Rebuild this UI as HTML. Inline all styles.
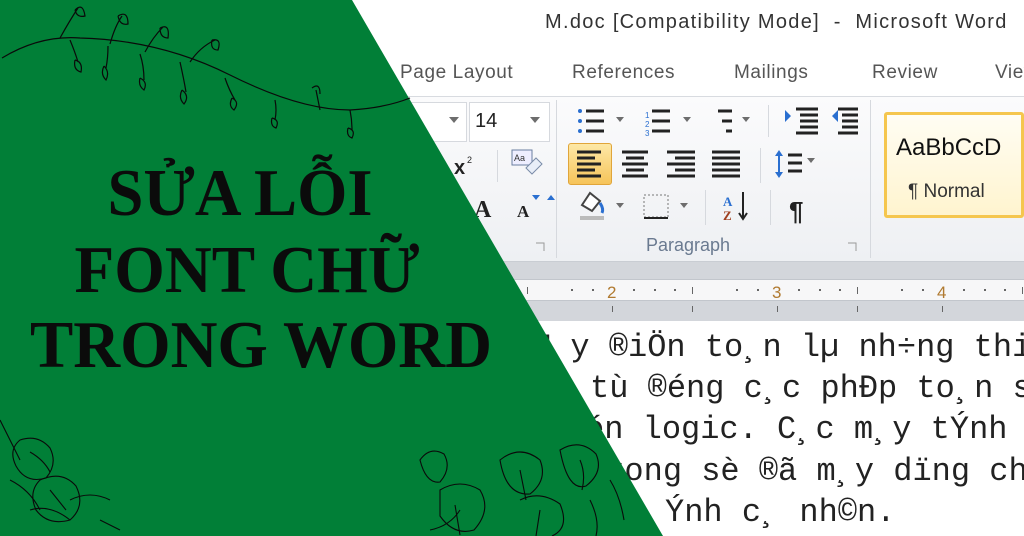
<!DOCTYPE html>
<html><head><meta charset="utf-8">
<style>
*{margin:0;padding:0;box-sizing:border-box}
body{width:1024px;height:536px;overflow:hidden;position:relative;background:#fff;font-family:"Liberation Sans",sans-serif}
.abs{position:absolute}
.title{left:545px;top:11px;font-size:20px;letter-spacing:1.3px;color:#333;white-space:nowrap}
.tab{top:62px;font-size:19px;letter-spacing:0.6px;color:#555;white-space:nowrap}
.ribbon{left:360px;top:96px;width:664px;height:166px;background:linear-gradient(#fbfbfc,#eef0f3);border-top:1px solid #d8dbe0;border-bottom:1px solid #c9cdd3}
.band{left:360px;top:262px;width:664px;height:60px;background:#d3d6db}
.ruler{left:360px;top:279px;width:664px;height:22px;background:#f7f7f8;border-top:1px solid #c2c6cc;border-bottom:1px solid #c2c6cc}
.doc{left:360px;top:321px;width:664px;height:215px;background:#fff}
.line{font-family:"Liberation Mono",monospace;font-size:32px;color:#222;white-space:nowrap;line-height:41px}
.green{left:0;top:0}
.sep{width:1px;background:#d6d9de}
</style></head><body>

<div class="abs title">M.doc [Compatibility Mode] &nbsp;-&nbsp; Microsoft Word</div>
<div class="abs tab" style="left:400px">Page Layout</div>
<div class="abs tab" style="left:572px">References</div>
<div class="abs tab" style="left:734px">Mailings</div>
<div class="abs tab" style="left:872px">Review</div>
<div class="abs tab" style="left:995px">View</div>

<div class="abs ribbon"></div>
<div class="abs" style="left:380px;top:102px;width:87px;height:40px;background:#fff;border:1px solid #d6d9de"></div>
<div class="abs" style="left:469px;top:102px;width:81px;height:40px;background:#fff;border:1px solid #d6d9de"></div>
<div class="abs" style="left:475px;top:110px;font-size:20px;color:#222">14</div>
<div class="abs sep" style="left:556px;top:100px;height:158px"></div>
<div class="abs sep" style="left:870px;top:100px;height:158px"></div>
<div class="abs sep" style="left:497px;top:150px;height:32px"></div>
<div class="abs sep" style="left:768px;top:105px;height:32px"></div>
<div class="abs sep" style="left:760px;top:148px;height:35px"></div>
<div class="abs sep" style="left:705px;top:190px;height:35px"></div>
<div class="abs sep" style="left:770px;top:190px;height:35px"></div>
<div class="abs" style="left:646px;top:235px;font-size:18px;color:#6a7a90">Paragraph</div>
<div class="abs" style="left:884px;top:112px;width:140px;height:106px;background:linear-gradient(#fffdf3,#fff4cf);border:3px solid #f5c64e;border-radius:3px"></div>
<div class="abs" style="left:896px;top:134px;font-size:24px;color:#111">AaBbCcD</div>
<div class="abs" style="left:908px;top:181px;font-size:19px;color:#333">¶ Normal</div>
<div class="abs" style="left:568px;top:143px;width:44px;height:42px;background:linear-gradient(#fde8a6,#f6c45a);border:1px solid #e0a53a;border-radius:3px"></div>

<svg class="abs" style="left:0;top:0" width="1024" height="536">
 <g fill="#6d6d6d"><path d="M449 117h10l-5 6z"/><path d="M530 117h10l-5 6z"/><path d="M616 117h8l-4 5z"/><path d="M683 117h8l-4 5z"/><path d="M742 117h8l-4 5z"/><path d="M807 158h8l-4 5z"/><path d="M616 203h8l-4 5z"/><path d="M680 203h8l-4 5z"/></g>
 <g stroke="#222" stroke-width="3">
  <path d="M586 111h18M586 121h18M586 131h18"/>
  <path d="M652 111h18M652 121h18M652 131h18"/>
  <path d="M718 111h14M722 121h10M726 131h6"/>
  <path d="M796 109h22M800 115h18M800 121h18M800 127h18M796 133h22"/>
  <path d="M838 109h20M842 115h16M842 121h16M842 127h16M838 133h20"/>
  <path d="M577 152h24M577 158h18M577 164h24M577 170h18M577 176h24"/>
  <path d="M622 152h26M626 158h18M622 164h26M626 170h18M622 176h26"/>
  <path d="M667 152h28M675 158h20M667 164h28M675 170h20M667 176h28"/>
  <path d="M712 152h28M712 158h28M712 164h28M712 170h28M712 176h28"/>
  <path d="M788 155h14M788 163h14M788 171h14"/>
 </g>
 <g fill="#2a6fd0"><circle cx="580" cy="111" r="2"/><circle cx="580" cy="121" r="2"/><circle cx="580" cy="131" r="2"/>
 <path d="M791 116l-6-6v12zM832 116l6-6v12z"/><path d="M779 150l-4 6h8zM779 178l-4-6h8z"/><path d="M551 195l-4 5h8zM536 200l-4-5h8z"/></g>
 <path d="M779 152v24" stroke="#2a6fd0" stroke-width="2"/>
 <text x="645" y="118" font-size="8" fill="#2a6fd0">1</text><text x="645" y="127" font-size="8" fill="#2a6fd0">2</text><text x="645" y="136" font-size="8" fill="#2a6fd0">3</text>
 <text x="454" y="174" font-size="20" font-weight="bold" fill="#222" font-family="Liberation Sans">x</text><text x="467" y="163" font-size="9" fill="#222">2</text>
 <rect x="512" y="150" width="20" height="15" fill="#eef" stroke="#6a7fa0"/><text x="514" y="161" font-size="9" fill="#333">Aa</text>
 <path d="M526 168l10-10 6 6-10 10z" fill="#e8eef8" stroke="#7a8ca8"/>
 <text x="474" y="217" font-size="24" font-family="Liberation Serif" font-weight="bold" fill="#222">A</text>
 <text x="517" y="217" font-size="17" font-family="Liberation Serif" font-weight="bold" fill="#222">A</text>
 <path d="M580 218h24" stroke="#bbb" stroke-width="4"/><path d="M582 205l8-12 10 8-8 10z" fill="#fff" stroke="#444" stroke-width="2"/><path d="M600 203q4 6 2 10" stroke="#2a6fd0" stroke-width="3" fill="none"/>
 <rect x="644" y="195" width="24" height="22" fill="none" stroke="#777" stroke-dasharray="2 2"/><path d="M644 218h24" stroke="#222" stroke-width="2"/>
 <text x="723" y="206" font-size="13" font-weight="bold" fill="#2a6fd0" font-family="Liberation Serif">A</text><text x="723" y="220" font-size="13" font-weight="bold" fill="#a04020" font-family="Liberation Serif">Z</text>
 <path d="M743 192v26M739 213l4 6 4-6" stroke="#222" stroke-width="2" fill="none"/>
 <text x="789" y="220" font-size="26" font-weight="bold" fill="#222">¶</text>
 <path d="M536 243h8v8M848 243h8v8" stroke="#999" fill="none"/>
</svg>

<div class="abs band"></div>
<div class="abs ruler"></div>
<svg class="abs" style="left:360px;top:279px" width="664" height="42">
 <g fill="#666"><rect x="167" y="8" width="1" height="7"/><rect x="332" y="8" width="1" height="7"/><rect x="497" y="8" width="1" height="7"/><rect x="662" y="8" width="1" height="7"/>
 <rect x="211" y="10" width="2" height="2"/><rect x="232" y="10" width="2" height="2"/><rect x="273" y="10" width="2" height="2"/><rect x="294" y="10" width="2" height="2"/><rect x="314" y="10" width="2" height="2"/>
 <rect x="376" y="10" width="2" height="2"/><rect x="397" y="10" width="2" height="2"/><rect x="438" y="10" width="2" height="2"/><rect x="459" y="10" width="2" height="2"/><rect x="479" y="10" width="2" height="2"/>
 <rect x="541" y="10" width="2" height="2"/><rect x="562" y="10" width="2" height="2"/><rect x="603" y="10" width="2" height="2"/><rect x="624" y="10" width="2" height="2"/><rect x="644" y="10" width="2" height="2"/>
 <rect x="252" y="27" width="1" height="6"/><rect x="417" y="27" width="1" height="6"/><rect x="582" y="27" width="1" height="6"/><rect x="167" y="27" width="1" height="6"/><rect x="332" y="27" width="1" height="6"/><rect x="497" y="27" width="1" height="6"/></g>
 <g font-size="17" fill="#b07a30" font-family="Liberation Sans"><text x="247" y="19">2</text><text x="412" y="19">3</text><text x="577" y="19">4</text></g>
</svg>
<div class="abs doc"></div>
<div class="abs line" style="left:532px;top:327px">M¸y ®iÖn to¸n lµ nh÷ng thiÕt</div>
<div class="abs line" style="left:590px;top:368px">tù ®éng c¸c phÐp to¸n s</div>
<div class="abs line" style="left:585px;top:409px">én logic. C¸c m¸y tÝnh c</div>
<div class="abs line" style="left:586px;top:451px">trong sè ®ã m¸y dïng ch</div>
<div class="abs line" style="left:665px;top:492px">Ýnh c¸ nh©n.</div>

<svg class="abs green" width="1024" height="536">
 <polygon points="0,0 352,0 663,536 0,536" fill="#017f37"/>
 <g stroke="#0a0a0a" stroke-width="1.2" fill="none">
  <path d="M2 58 Q40 35 80 38 Q160 40 230 75 Q300 110 350 110 Q385 108 410 98"/>
  <path d="M60 38 Q70 20 78 8M75 10q8-8 10 6q-8 2-10-6M110 44q5-18 12-28M118 16q10-6 10 8q-8 2-10-8M145 52q8-15 18-25M160 28q10-5 8 10q-8 0-8-10M190 62q10-15 25-22M212 40q10-2 6 10q-8 0-6-10"/>
  <path d="M70 40q5 12 8 22M75 60q8 2 6 12q-8-2-6-12M108 46q0 12-2 22M104 66q6 6 2 14q-6-6-2-14M140 54q4 12 4 26M140 78q8 4 4 12q-6-4-4-12M180 62q4 18 6 30M182 90q8 6 2 14q-6-6-2-14M225 78q4 12 10 22M232 98q8 4 2 12q-6-4-2-12M275 100q2 10 0 20M272 118q8 2 4 10q-6-2-4-10M320 110q-2-10-4-20M312 88q8-6 8 6M350 110q2 10 2 20M348 128q8 2 4 10q-6-2-4-10"/>
 </g>
 <g stroke="#0a0a0a" stroke-width="1.1" fill="none">
  <path d="M0 420q10 20 20 40M20 440q18-6 30 8q8 16-4 30q-20 6-30-12q-8-16 4-26zM30 452q14 8 20 20M10 480q20 10 30 30"/>
  <path d="M40 480q22-10 36 6q10 20-6 34q-22 6-34-10q-8-18 4-30zM50 490l16 20M30 510q20-6 40 10M70 500q20-10 40 0M100 520l20 10"/>
  <path d="M420 460q10-14 24-6q8 14-4 28q-14 2-20-22zM440 490q20-12 40 0q12 20-6 40q-20 6-34-14zM460 510q-10 16-30 20M455 505l5 30"/>
  <path d="M500 460q20-16 40 0q8 20-10 34q-24 2-30-34zM520 470l6 30M560 450q20-12 36 4q8 18-10 32q-18 6-26-36zM580 460q6 14 2 30"/>
  <path d="M520 500q20-10 40 4q10 24-8 32M540 510l-4 26M590 500q10 20 6 36M610 480q10 16 14 40"/>
 </g>
 <text x="240" y="215" text-anchor="middle" font-family="Liberation Serif" font-weight="bold" font-size="67" fill="#0b0b0b" textLength="265" lengthAdjust="spacingAndGlyphs">SỬA LỖI</text>
 <text x="247" y="292" text-anchor="middle" font-family="Liberation Serif" font-weight="bold" font-size="67" fill="#0b0b0b" textLength="345" lengthAdjust="spacingAndGlyphs">FONT CHỮ</text>
 <text x="261" y="367" text-anchor="middle" font-family="Liberation Serif" font-weight="bold" font-size="67" fill="#0b0b0b" textLength="462" lengthAdjust="spacingAndGlyphs">TRONG WORD</text>
</svg>
</body></html>
